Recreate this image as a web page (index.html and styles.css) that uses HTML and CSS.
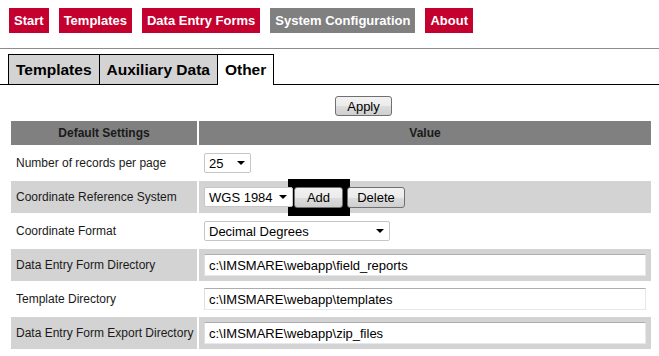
FILE: index.html
```html
<!DOCTYPE html>
<html lang="en">
<head>
    <meta charset="UTF-8">
    <title>System Configuration</title>
    <link rel="stylesheet" href="styles.css">
</head>
<body>
    <nav class="nav">
        <a class="nav-btn">Start</a>
        <a class="nav-btn">Templates</a>
        <a class="nav-btn">Data Entry Forms</a>
        <a class="nav-btn active">System Configuration</a>
        <a class="nav-btn">About</a>
    </nav>
    <div class="rule"></div>

    <ul class="tabs">
        <li class="tab">Templates</li>
        <li class="tab">Auxiliary Data</li>
        <li class="tab current">Other</li>
    </ul>

    <div class="apply-row">
        <button class="btn btn-apply">Apply</button>
    </div>

    <table class="settings">
        <thead>
            <tr>
                <th class="col-name">Default Settings</th>
                <th>Value</th>
            </tr>
        </thead>
        <tbody>
            <tr>
                <td class="label">Number of records per page</td>
                <td>
                    <span class="select select-small"><select><option>25</option></select></span>
                </td>
            </tr>
            <tr class="alt">
                <td class="label">Coordinate Reference System</td>
                <td>
                    <div class="crs-row">
                        <span class="select select-crs"><select><option>WGS 1984</option></select></span>
                        <span class="focus-ring"><button class="btn btn-add">Add</button></span>
                        <button class="btn btn-delete">Delete</button>
                    </div>
                </td>
            </tr>
            <tr>
                <td class="label">Coordinate Format</td>
                <td>
                    <span class="select select-wide"><select><option>Decimal Degrees</option></select></span>
                </td>
            </tr>
            <tr class="alt">
                <td class="label">Data Entry Form Directory</td>
                <td><input class="text" type="text" value="c:\IMSMARE\webapp\field_reports"></td>
            </tr>
            <tr>
                <td class="label">Template Directory</td>
                <td><input class="text" type="text" value="c:\IMSMARE\webapp\templates"></td>
            </tr>
            <tr class="alt">
                <td class="label">Data Entry Form Export Directory</td>
                <td><input class="text" type="text" value="c:\IMSMARE\webapp\zip_files"></td>
            </tr>
        </tbody>
    </table>
</body>
</html>
```

FILE: styles.css
```css
body {
    margin: 0;
    font-family: 'Liberation Sans', Arial, sans-serif;
    background-color: #fff;
    color: #1a1a1a;
}

/* top navigation */
.nav {
    display: flex;
    gap: 10px;
    padding: 8px 9px 0;
}

.nav-btn {
    display: block;
    height: 25px;
    line-height: 25px;
    padding: 0 5px;
    background-color: #c4002f;
    color: #fff;
    font-size: 13px;
    font-weight: bold;
    cursor: pointer;
}

.nav-btn.active {
    background-color: #808080;
}

.rule {
    margin-top: 15px;
    border-top: 1px solid #8c8c8c;
}

/* tabs */
.tabs {
    display: flex;
    list-style: none;
    margin: 5px 0 0;
    padding: 0 0 0 8px;
    border-bottom: 1px solid #000;
}

.tab {
    height: 29px;
    line-height: 29px;
    padding: 0 7px;
    background-color: #d3d3d3;
    border: 1px solid #000;
    border-bottom: none;
    font-size: 15.5px;
    font-weight: bold;
    color: #000;
}

.tab + .tab {
    margin-left: -1px;
}

.tab.current {
    background-color: #fff;
    height: 30px;
    margin-bottom: -1px;
}

/* buttons */
.btn {
    font-family: 'Liberation Sans', Arial, sans-serif;
    font-size: 13px;
    color: #000;
    height: 21px;
    padding: 0;
    border: 1px solid #707070;
    border-radius: 3px;
    background: linear-gradient(#f2f2f2, #ebebeb 50%, #dddddd 50%, #cfcfcf);
}

.apply-row {
    margin-top: 11px;
    padding-left: 335px;
}

.btn-apply {
    width: 57px;
    height: 20px;
    display: block;
}

/* black focus frame around the Add button */
.focus-ring {
    display: block;
    padding: 8px 7px 8px 6px;
    margin: -8px -7px -8px -5px;
    background-color: #000;
}

.btn-add {
    display: block;
    width: 49px;
}

.btn-delete {
    width: 58px;
    margin-left: 4px;
}

/* settings table */
.settings {
    margin: 3px 0 0 9px;
    width: 644px;
    border-spacing: 2px;
    font-size: 12px;
    table-layout: fixed;
}

.settings th {
    height: 24px;
    padding: 0;
    background-color: #808080;
    color: #1a1a1a;
    font-size: 12px;
    font-weight: bold;
    text-align: center;
}

.settings th.col-name {
    width: 186px;
}

.settings td {
    height: 32px;
    padding: 0 5px;
    color: #1a1a1a;
    white-space: nowrap;
}

.settings td.label {
    padding-right: 0;
    overflow: visible;
}

.settings tr.alt td {
    background-color: #d3d3d3;
}

.crs-row {
    display: flex;
    align-items: center;
}

/* selects with drawn arrow */
.select {
    position: relative;
    display: inline-block;
    vertical-align: middle;
}

.select select {
    appearance: none;
    -webkit-appearance: none;
    display: block;
    height: 20px;
    padding: 0 0 0 4px;
    border: 1px solid #c6c6c6;
    border-radius: 2px;
    background-color: #fff;
    font-family: 'Liberation Sans', Arial, sans-serif;
    font-size: 13px;
    color: #000;
}

.select::after {
    content: '';
    position: absolute;
    right: 6px;
    top: 8px;
    border-left: 4px solid transparent;
    border-right: 4px solid transparent;
    border-top: 4px solid #000;
}

.select-small select {
    width: 47px;
}

.select-crs select {
    width: 89px;
}

.select-wide select {
    width: 186px;
}

.text {
    display: block;
    box-sizing: border-box;
    width: 442px;
    height: 22px;
    padding: 0 4px;
    border: 1px solid #e3e9ef;
    border-top-color: #abadb3;
    border-left-color: #dbdfe6;
    font-family: 'Liberation Sans', Arial, sans-serif;
    font-size: 13px;
    color: #000;
}
```
